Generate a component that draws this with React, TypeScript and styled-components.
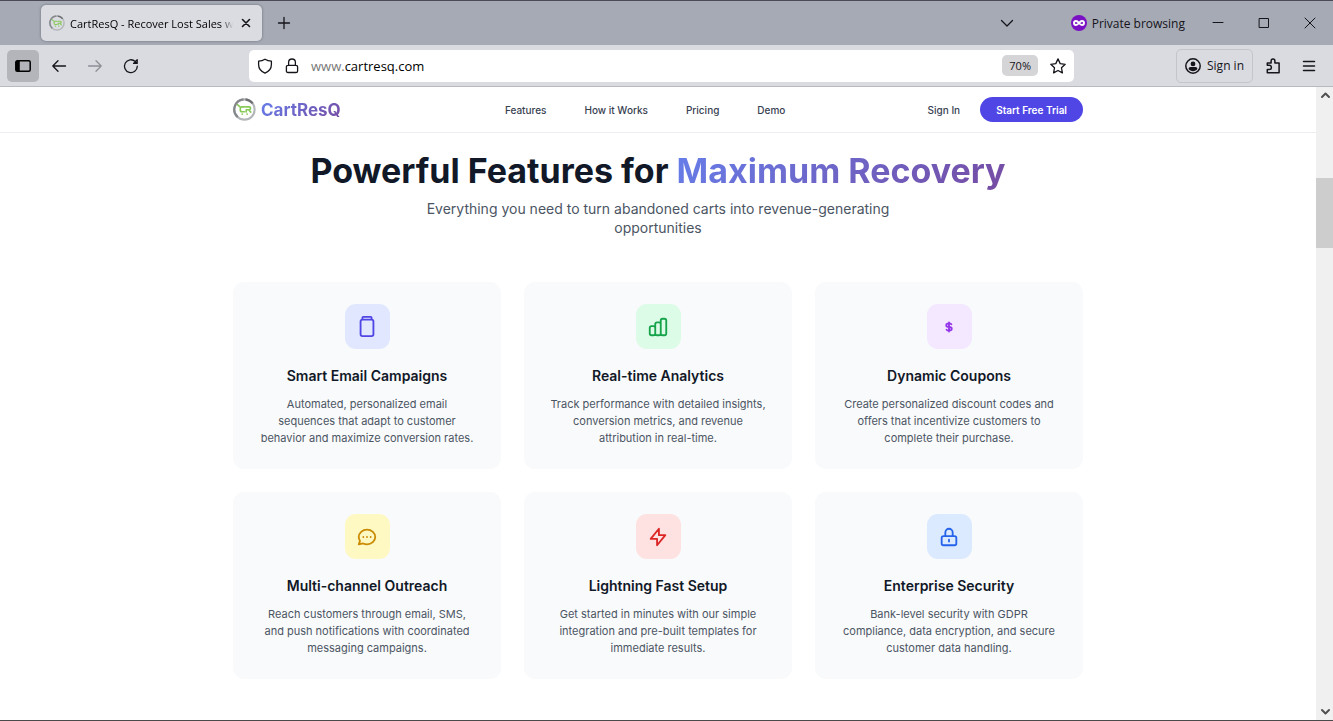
import React from "react";
import styled, { createGlobalStyle } from "styled-components";

const Global = createGlobalStyle`
  * { box-sizing: border-box; }
  html, body { margin: 0; padding: 0; background: #fff; }
  button, input { font: inherit; color: inherit; border: 0; background: none; padding: 0; margin: 0; }
  a { color: inherit; text-decoration: none; }
  h2, h3, p { margin: 0; }
  svg { display: block; flex: none; }
`;

const Browser = styled.div`
  min-height: 100vh;
  display: flex;
  flex-direction: column;
  border-top: 1px solid #4a4955;
  border-bottom: 1px solid #4a4a4a;
  font-family: "Open Sans", sans-serif;
  font-size: 12px;
  color: #15141a;
`;

const TabStrip = styled.div`
  height: 44px;
  display: flex;
  align-items: center;
  padding-left: 41px;
  background: #a6aab5;
`;

const Tab = styled.div`
  width: 221px;
  height: 36px;
  display: flex;
  align-items: center;
  gap: 5px;
  padding: 0 8px;
  border-radius: 5px;
  background: #dbdce2;
  box-shadow: 0 0 3px rgba(0, 0, 0, 0.35);
`;

const TabTitle = styled.span`
  flex: 1;
  min-width: 0;
  overflow: hidden;
  white-space: nowrap;
  font-size: 11px;
  color: #000;
  mask-image: linear-gradient(to left, transparent, #000 12px);
`;

const IconButton = styled.button<{ $w?: number; $active?: boolean }>`
  width: ${(p) => p.$w ?? 32}px;
  height: 32px;
  flex: none;
  display: flex;
  align-items: center;
  justify-content: center;
  border-radius: 5px;
  background: ${(p) => (p.$active ? "#b4b5bb" : "transparent")};
`;

const Spacer = styled.div`
  flex: 1;
`;

const PrivateBadge = styled.div`
  display: flex;
  align-items: center;
  gap: 5px;
  margin: 0 10px 0 48px;
`;

const Toolbar = styled.div`
  height: 42px;
  display: flex;
  align-items: center;
  padding: 0 8px 0 7px;
  background: #dadbe1;
  border-bottom: 1px solid #b9bac0;
`;

const NavButtons = styled.div`
  flex: 1;
  display: flex;
  gap: 4px;
`;

const UrlBar = styled.div`
  flex: 0 1 825px;
  height: 32px;
  display: flex;
  align-items: center;
  padding: 0 8px;
  border-radius: 5px;
  background: #fff;
`;

const Address = styled.a`
  flex: 1;
  font-size: 13px;
  color: #000;
`;

const Muted = styled.span`
  color: #777;
`;

const ZoomLevel = styled.button`
  height: 21px;
  padding: 0 7px;
  margin-right: 12px;
  border-radius: 5px;
  background: #d5d5d7;
  font-size: 11px;
`;

const ToolbarEnd = styled.div`
  flex: 1;
  display: flex;
  align-items: center;
  justify-content: flex-end;
  gap: 4px;
  padding-left: 9px;
`;

const SignInButton = styled.button`
  height: 34px;
  display: flex;
  align-items: center;
  gap: 6px;
  padding: 0 8px;
  border: 1px solid #c4c5cb;
  border-radius: 5px;
`;

const Viewport = styled.div`
  flex: 1;
  display: flex;
`;

const Page = styled.main`
  flex: 1;
  min-width: 0;
  font-family: Inter, sans-serif;
  color: #111827;
  background: #fff;
`;

const Scrollbar = styled.div`
  width: 17px;
  display: flex;
  flex-direction: column;
  align-items: center;
  background: #f0f0f0;
`;

const ScrollThumb = styled.div`
  width: 17px;
  height: 70px;
  margin: 75px 0 auto;
  background: #cdcdcd;
`;

const Container = styled.div`
  max-width: 894px;
  margin: 0 auto;
  padding: 0 22px;
`;

const SiteHeader = styled.header`
  border-bottom: 1px solid #eceef1;
`;

const HeaderRow = styled(Container)`
  height: 45px;
  display: flex;
  align-items: center;
  justify-content: space-between;
  font-size: 10px;
  font-weight: 500;
  color: #374151;
`;

const Brand = styled.a`
  display: flex;
  align-items: center;
  gap: 5px;
`;

const GradientText = styled.span`
  background: linear-gradient(135deg, #667eea 0%, #764ba2 100%);
  background-clip: text;
  -webkit-background-clip: text;
  color: transparent;
`;

const BrandName = styled(GradientText)`
  font-size: 17px;
  line-height: 22px;
  font-weight: 700;
`;

const SiteNav = styled.nav`
  display: flex;
  gap: 38px;
  margin-left: 22px;
`;

const Account = styled.div`
  display: flex;
  align-items: center;
  gap: 20px;
`;

const TrialButton = styled.button`
  height: 25px;
  padding: 0 16px;
  border-radius: 13px;
  background: #4f46e5;
  color: #fff;
  font-weight: 600;
`;

const Features = styled.section`
  padding: 18px 0 41px;
`;

const Heading = styled.h2`
  font-size: 34px;
  line-height: 40px;
  font-weight: 700;
  text-align: center;
`;

const Lead = styled.p`
  max-width: 470px;
  margin: 8px auto 45px;
  font-size: 14px;
  line-height: 19px;
  text-align: center;
  color: #4b5563;
`;

const Grid = styled.div`
  display: grid;
  grid-template-columns: repeat(3, 1fr);
  gap: 23px;
`;

const Card = styled.article`
  display: flex;
  flex-direction: column;
  align-items: center;
  padding: 22px 25px;
  border-radius: 11px;
  background: #f9fafb;
  text-align: center;
`;

const IconTile = styled.div<{ $bg: string; $fg: string }>`
  width: 45px;
  height: 45px;
  display: flex;
  align-items: center;
  justify-content: center;
  border-radius: 11px;
  background: ${(p) => p.$bg};
  color: ${(p) => p.$fg};
`;

const CardTitle = styled.h3`
  margin: 17px 0 10px;
  font-size: 14px;
  line-height: 20px;
  font-weight: 600;
`;

const CardText = styled.p`
  font-size: 11px;
  line-height: 17px;
  color: #4b5563;
`;

type Feature = { title: string; text: string; bg: string; fg: string; path: string };

const features: Feature[] = [
  {
    title: "Smart Email Campaigns",
    text: "Automated, personalized email sequences that adapt to customer behavior and maximize conversion rates.",
    bg: "#e0e7ff",
    fg: "#4f46e5",
    path: "M7 4V2a1 1 0 011-1h8a1 1 0 011 1v2M7 4h10M7 4a2 2 0 00-2 2v14a2 2 0 002 2h10a2 2 0 002-2V6a2 2 0 00-2-2",
  },
  {
    title: "Real-time Analytics",
    text: "Track performance with detailed insights, conversion metrics, and revenue attribution in real-time.",
    bg: "#dcfce7",
    fg: "#16a34a",
    path: "M9 19v-6a2 2 0 00-2-2H5a2 2 0 00-2 2v6a2 2 0 002 2h2a2 2 0 002-2zm0 0V9a2 2 0 012-2h2a2 2 0 012 2v10m-6 0a2 2 0 002 2h2a2 2 0 002-2m0 0V5a2 2 0 012-2h2a2 2 0 012 2v14a2 2 0 01-2 2h-2a2 2 0 01-2-2z",
  },
  {
    title: "Dynamic Coupons",
    text: "Create personalized discount codes and offers that incentivize customers to complete their purchase.",
    bg: "#f3e8ff",
    fg: "#9333ea",
    path: "M12 8c-1.657 0-3 .895-3 2s1.343 2 3 2 3 .895 3 2-1.343 2-3 2m0-8c1.11 0 2.08.402 2.599 1M12 8V7m0 1v8m0 0v1m0-1c-1.11 0-2.08-.402-2.599-1",
  },
  {
    title: "Multi-channel Outreach",
    text: "Reach customers through email, SMS, and push notifications with coordinated messaging campaigns.",
    bg: "#fef9c3",
    fg: "#ca8a04",
    path: "M8 12h.01M12 12h.01M16 12h.01M21 12c0 4.418-4.03 8-9 8a9.863 9.863 0 01-4.255-.949L3 20l1.395-3.72C3.512 15.042 3 13.574 3 12c0-4.418 4.03-8 9-8s9 3.582 9 8z",
  },
  {
    title: "Lightning Fast Setup",
    text: "Get started in minutes with our simple integration and pre-built templates for immediate results.",
    bg: "#fee2e2",
    fg: "#dc2626",
    path: "M13 10V3L4 14h7v7l9-11h-7z",
  },
  {
    title: "Enterprise Security",
    text: "Bank-level security with GDPR compliance, data encryption, and secure customer data handling.",
    bg: "#dbeafe",
    fg: "#2563eb",
    path: "M12 15v2m-6 4h12a2 2 0 002-2v-6a2 2 0 00-2-2H6a2 2 0 00-2 2v6a2 2 0 002 2zm10-10V7a4 4 0 00-8 0v4h8z",
  },
];

type GlyphProps = { d: string; size?: number; color?: string; width?: number };

const Glyph = ({ d, size = 16, color = "#15141a", width = 1.3 }: GlyphProps) => (
  <svg width={size} height={size} viewBox="0 0 16 16" fill="none" stroke={color} strokeWidth={width} strokeLinecap="round" strokeLinejoin="round" aria-hidden="true">
    <path d={d} />
  </svg>
);

const Logo = ({ size }: { size: number }) => (
  <svg width={size} height={size} viewBox="0 0 24 24" fill="none" aria-hidden="true">
    <circle cx="12" cy="12" r="10.6" stroke="#b4b7ba" strokeWidth="2.2" />
    <path d="M5 20A10.6 10.6 0 0 1 11 1.4" stroke="#85888b" strokeWidth="2.2" />
    <path d="M13 1.4A10.6 10.6 0 0 1 20.5 5.7" stroke="#6d7073" strokeWidth="2.2" />
    <g stroke="#86c957" strokeWidth="1.7" strokeLinecap="round" strokeLinejoin="round">
      <path d="M4.6 7l2.800 2.200M12 9.300H9.500c-1.300 0-1.900.7-1.900 1.900v1.200c0 1.200.7 1.900 1.900 1.900H12" />
      <path d="M13.300 9.300h3.500c2.100 0 2.100 3 0 3h-3v2.200M16.500 12.500l2 2.200" />
    </g>
    <circle cx="9.600" cy="16.800" r="0.900" fill="#86c957" />
    <circle cx="14.800" cy="16.800" r="0.900" fill="#86c957" />
  </svg>
);

export default function App() {
  return (
    <Browser>
      <Global />
      <TabStrip>
        <Tab>
          <Logo size={16} />
          <TabTitle>CartResQ - Recover Lost Sales w</TabTitle>
          <Glyph d="M4.5 4.5l7 7m0-7l-7 7" width={1.6} />
        </Tab>
        <IconButton $w={44} aria-label="New tab">
          <Glyph d="M8 2.5v11M2.5 8h11" />
        </IconButton>
        <Spacer />
        <IconButton aria-label="List all tabs">
          <Glyph d="M2.5 5.5L8 11l5.500-5.500" />
        </IconButton>
        <PrivateBadge>
          <svg width="16" height="16" viewBox="0 0 16 16" aria-hidden="true">
            <circle cx="8" cy="8" r="8" fill="#7a12c4" />
            <path
              d="M8 8C6.900 6.600 6.100 6 5 6a2 2 0 0 0 0 4c1.100 0 1.900-.6 3-2s1.900-2 3-2a2 2 0 0 1 0 4c-1.100 0-1.900-.6-3-2z"
              fill="none"
              stroke="#fff"
              strokeWidth="1.900"
              strokeLinejoin="round"
            />
          </svg>
          <span>Private browsing</span>
        </PrivateBadge>
        <IconButton $w={46} aria-label="Minimize">
          <Glyph d="M3 7.500h10" width={1} />
        </IconButton>
        <IconButton $w={46} aria-label="Maximize">
          <Glyph d="M3.500 3.500h9v9h-9z" width={1} />
        </IconButton>
        <IconButton $w={46} aria-label="Close">
          <Glyph d="M3 3l10 10m0-10L3 13" width={1} />
        </IconButton>
      </TabStrip>

      <Toolbar>
        <NavButtons>
          <IconButton $active aria-label="Sidebar">
            <svg width="16" height="16" viewBox="0 0 16 16" aria-hidden="true">
              <rect x="0.800" y="2.800" width="14.400" height="10.400" rx="1.500" fill="none" stroke="#000" strokeWidth="1.500" />
              <path d="M1 3h3.800v10H1z" fill="#000" />
            </svg>
          </IconButton>
          <IconButton aria-label="Back">
            <Glyph d="M14.500 8H1.800M7 2.800L1.800 8 7 13.200" />
          </IconButton>
          <IconButton aria-label="Forward">
            <Glyph d="M1.500 8h12.700M9 2.800L14.200 8 9 13.200" color="#8f9096" />
          </IconButton>
          <IconButton aria-label="Reload">
            <Glyph d="M14.300 8.200A6.400 6.400 0 1 1 12.300 3.500L14 5.200M14.200 1.800v3.600h-3.600z" />
          </IconButton>
        </NavButtons>
        <UrlBar>
          <Glyph d="M8 1.200c2 1.300 4 1.900 6.400 2v3.300c0 4-2.400 7-6.400 8.600-4-1.600-6.400-4.600-6.400-8.600V3.200C4 3.100 6 2.500 8 1.200z" />
          <IconButton $w={38} aria-label="Site information">
            <Glyph d="M4 7.300h8c1 0 1.600.6 1.600 1.600v4c0 1-.6 1.600-1.600 1.600H4c-1 0-1.600-.6-1.600-1.600v-4c0-1 .6-1.600 1.600-1.600zM4.600 7.300V4.400a3.400 3.400 0 0 1 6.800 0v2.900" />
          </IconButton>
          <Address href="#top">
            <Muted>www.</Muted>cartresq.com
          </Address>
          <ZoomLevel>70%</ZoomLevel>
          <Glyph d="M8 .9l2.200 4.700 5 .7-3.700 3.500.9 5.100L8 12.500l-4.400 2.400.9-5.100L.8 6.300l5-.7z" />
        </UrlBar>
        <ToolbarEnd>
          <SignInButton>
            <svg width="16" height="16" viewBox="0 0 16 16" aria-hidden="true">
              <circle cx="8" cy="8" r="7.200" fill="none" stroke="#15141a" strokeWidth="1.500" />
              <circle cx="8" cy="5.900" r="2.400" fill="#15141a" />
              <path d="M3.600 11c0-1.200.8-1.900 2-1.900h4.800c1.200 0 2 .7 2 1.900-1 1.400-2.600 2.200-4.400 2.200S4.600 12.400 3.600 11z" fill="#15141a" />
            </svg>
            <span>Sign in</span>
          </SignInButton>
          <IconButton aria-label="Extensions">
            <Glyph width={1.5} d="M2.300 7.200V4.900h3.800V3a1.900 1.900 0 0 1 3.800 0v1.900h4.200v9.800H2.300v-3.100h1.900a2.200 2.200 0 0 0 0-4.400z" />
          </IconButton>
          <IconButton aria-label="Menu">
            <Glyph width={1.5} d="M2.500 3.500h11M2.500 8h11M2.500 12.500h11" />
          </IconButton>
        </ToolbarEnd>
      </Toolbar>

      <Viewport>
        <Page id="top">
          <SiteHeader>
            <HeaderRow>
              <Brand href="#top">
                <Logo size={23} />
                <BrandName>CartResQ</BrandName>
              </Brand>
              <SiteNav>
                <a href="#features">Features</a>
                <a href="#how">How it Works</a>
                <a href="#pricing">Pricing</a>
                <a href="#demo">Demo</a>
              </SiteNav>
              <Account>
                <a href="#signin">Sign In</a>
                <TrialButton>Start Free Trial</TrialButton>
              </Account>
            </HeaderRow>
          </SiteHeader>
          <Features id="features">
            <Container>
              <Heading>
                Powerful Features for <GradientText>Maximum Recovery</GradientText>
              </Heading>
              <Lead>Everything you need to turn abandoned carts into revenue-generating opportunities</Lead>
              <Grid>
                {features.map((f) => (
                  <Card key={f.title}>
                    <IconTile $bg={f.bg} $fg={f.fg}>
                      <svg width="22" height="22" viewBox="0 0 24 24" fill="none" stroke="currentColor" strokeWidth="2" strokeLinecap="round" strokeLinejoin="round" aria-hidden="true">
                        <path d={f.path} />
                      </svg>
                    </IconTile>
                    <CardTitle>{f.title}</CardTitle>
                    <CardText>{f.text}</CardText>
                  </Card>
                ))}
              </Grid>
            </Container>
          </Features>
        </Page>
        <Scrollbar aria-hidden="true">
          <Glyph d="M5 10l3.500-3.500L12 10" color="#505050" width={2} />
          <ScrollThumb />
          <Glyph d="M5 6l3.500 3.500L12 6" color="#505050" width={2} />
        </Scrollbar>
      </Viewport>
    </Browser>
  );
}
